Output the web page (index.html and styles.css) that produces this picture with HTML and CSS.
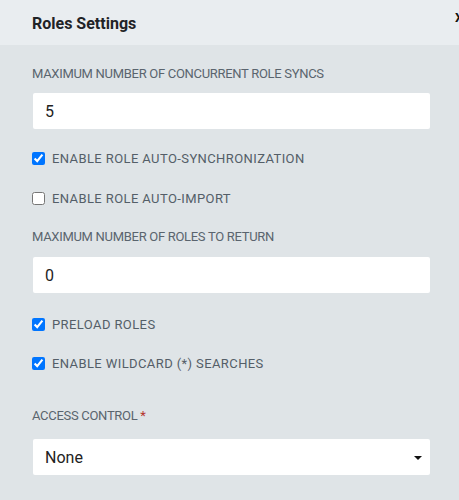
FILE: index.html
```html
<!DOCTYPE html>
<html>
<head>
<meta charset="utf-8">
<link rel="stylesheet" href="styles.css">
</head>
<body>
<div class="dialog">
  <div class="header">
    <span class="title">Roles Settings</span>
    <span class="close">X</span>
  </div>
  <div class="content">
    <label class="field-label m-21">MAXIMUM NUMBER OF CONCURRENT ROLE SYNCS</label>
    <div class="input m-11">5</div>
    <label class="check m-19"><input type="checkbox" checked><span>ENABLE ROLE AUTO-SYNCHRONIZATION</span></label>
    <label class="check m-20"><input type="checkbox"><span>ENABLE ROLE AUTO-IMPORT</span></label>
    <label class="field-label m-21">MAXIMUM NUMBER OF ROLES TO RETURN</label>
    <div class="input m-12">0</div>
    <label class="check m-21"><input type="checkbox" checked><span>PRELOAD ROLES</span></label>
    <label class="check m-19"><input type="checkbox" checked><span>ENABLE WILDCARD (*) SEARCHES</span></label>
    <label class="field-label m-35">ACCESS CONTROL <span class="req">*</span></label>
    <div class="input select m-15"><span>None</span><span class="caret"></span></div>
  </div>
</div>
</body>
</html>
```
FILE: styles.css
```css
html, body {
  margin: 0;
  padding: 0;
  background: #dfe4e7;
  overflow: hidden;
  font-family: Roboto, "Liberation Sans", sans-serif;
}
.dialog {
  width: 459px;
  height: 500px;
}
.header {
  position: relative;
  height: 45px;
  background: #e9edf0;
  display: flex;
  align-items: center;
  padding-left: 32px;
}
.title {
  font-size: 16px;
  font-weight: 700;
  color: #1f2327;
  margin-top: 1px;
}
.close {
  position: absolute;
  left: 455px;
  top: 10px;
  font-size: 13px;
  font-weight: 700;
  color: #111;
}
.content {
  display: flex;
  flex-direction: column;
  padding: 0 29px 0 33px;
}
.field-label {
  font-size: 13px;
  line-height: 16px;
  letter-spacing: -0.3px;
  color: #5a646e;
  margin-left: -1px;
}
.req { color: #b5332c; }
.input {
  height: 36px;
  background: #fff;
  border-radius: 2px;
  display: flex;
  align-items: center;
  padding: 0 12px;
  font-size: 16px;
  color: #222;
}
.select {
  justify-content: space-between;
}
.caret {
  width: 0;
  height: 0;
  border-left: 4px solid transparent;
  border-right: 4px solid transparent;
  border-top: 4px solid #111;
  margin-right: -4px;
  margin-top: 2px;
}
.check {
  height: 20px;
  display: flex;
  align-items: center;
  font-size: 13px;
  letter-spacing: 0.4px;
  color: #545e68;
  margin-left: -1px;
}
.check input {
  width: 13px;
  height: 13px;
  margin: 0 7px 0 0;
}
.m-11 { margin-top: 11px; }
.m-12 { margin-top: 12px; }
.m-15 { margin-top: 15px; }
.m-19 { margin-top: 19px; }
.m-20 { margin-top: 20px; }
.m-21 { margin-top: 21px; }
.m-35 { margin-top: 35px; }
```
